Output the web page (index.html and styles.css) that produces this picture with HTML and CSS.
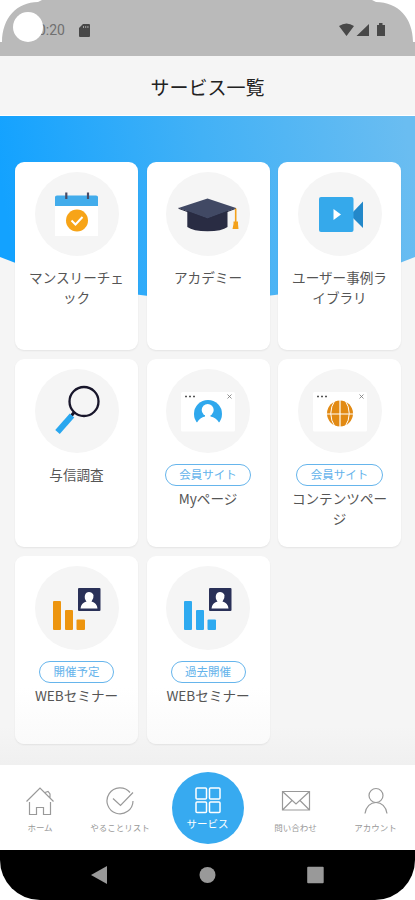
FILE: index.html
```html
<!DOCTYPE html>
<html lang="ja">
<head>
<meta charset="utf-8">
<meta name="viewport" content="width=device-width">
<title>サービス一覧</title>
<link rel="stylesheet" href="styles.css">
</head>
<body>
<div class="phone">
  <header class="status">
    <svg class="status-shape" viewBox="0 0 415 56"><path fill="#bababa" d="M0 56V42H2C2 18 17 2 38 2L42 0H372L376 2C398 2 413 18 413 42H415V56Z"/></svg>
    <span class="clock">10:20</span>
    <svg class="sd" viewBox="0 0 11 13"><path fill="#484848" d="M4 0H10Q11 0 11 1V12Q11 13 10 13H1Q0 13 0 12V4Z"/><path stroke="#bababa" stroke-width=".8" d="M4.500 2V4M6.700 2V4M8.900 2V4"/></svg>
    <span class="camera"></span>
    <svg class="signals" viewBox="0 0 47 14"><path fill="#484848" d="M0 3Q7.500-2 15 3L7.500 13ZM17.500 13L30 1V13ZM38 2H40V0H43.500V2H46V13H38Z"/></svg>
  </header>
  <h1 class="title">サービス一覧</h1>
  <main class="content">
    <svg class="hero" viewBox="0 0 415 184"><defs><linearGradient id="sky" gradientUnits="userSpaceOnUse" x1="0" y1="65" x2="405" y2="0"><stop stop-color="#13a2ff"/><stop offset=".5" stop-color="#42b1f6"/><stop offset="1" stop-color="#6abdf1"/></linearGradient></defs><path fill="url(#sky)" d="M0 0H415V141Q207.500 226 0 141Z"/></svg>
    <div class="grid">
      <a class="card">
        <svg class="icon" viewBox="0 0 84 84"><path fill="#fff" d="M20 31H63V64H20Z"/><path fill="#42aceb" d="M20 34V25Q20 23.500 22 23.500H61Q63 23.500 63 25V34Z"/><path stroke="#474b66" stroke-width="2.200" d="M31.300 20.500V27M53 20.500V27"/><circle cx="42" cy="48.500" r="11" fill="#f7a417"/><path fill="none" stroke="#fff" stroke-width="2" d="M36.500 48.500L40.500 52.500L47.500 45"/></svg>
        <span class="name">マンスリーチェック</span>
      </a>
      <a class="card">
        <svg class="icon" viewBox="0 0 84 84"><path fill="#292c43" d="M21.300 38H61.500V55Q56 59.200 41.500 59.200T21.300 55Z"/><path fill="#414964" d="M12.500 36L41.500 26.500L70 36L41.500 46.500Z"/><path fill="none" stroke="#292c43" d="M12.500 36.300L41.500 47L70 36.300"/><path fill="none" stroke="#f3a11c" stroke-width="1.600" d="M69.700 36.500V51"/><path fill="#f3a11c" d="M67.500 49.500H72V52L72.500 57H66.500L67.500 52Z"/></svg>
        <span class="name">アカデミー</span>
      </a>
      <a class="card">
        <svg class="icon" viewBox="0 0 84 84"><path fill="#2388c9" d="M55 40L65 29.500V56L55 46Z"/><rect x="21" y="25" width="34.500" height="35" rx="2" fill="#35a9eb"/><path fill="#fff" d="M35.500 37L43 42.500L35.500 48Z"/></svg>
        <span class="name">ユーザー事例ライブラリ</span>
      </a>
      <a class="card">
        <svg class="icon" viewBox="0 0 84 84"><circle cx="49" cy="32.500" r="14.500" fill="none" stroke="#18162b" stroke-width="2.300"/><path stroke="#18162b" stroke-width="3" d="M39.500 43L36.500 46.500"/><path stroke="#29a7ef" stroke-width="6" d="M37 46.500L22.500 63"/></svg>
        <span class="name">与信調査</span>
      </a>
      <a class="card">
        <svg class="icon" viewBox="0 0 84 84"><rect x="15" y="23" width="54" height="39.500" rx="1.500" fill="#fff"/><path stroke="#555" stroke-width="1.500" stroke-dasharray="2 2" d="M19 27.500H29"/><path stroke="#777" stroke-width=".8" d="M61.500 25.500L65.500 29.500M65.500 25.500L61.500 29.500"/><circle cx="42" cy="45" r="14" fill="#2fa8ed"/><circle cx="41.700" cy="41" r="6" fill="#fff"/><path fill="#fff" d="M39 45H44.500V47.500Q50 48.500 53 53.500L57 54V60H27V54L31 53.500Q34 48.500 39 47.500Z"/></svg>
        <span class="tag">会員サイト</span>
        <span class="name">Myページ</span>
      </a>
      <a class="card">
        <svg class="icon" viewBox="0 0 84 84"><rect x="15" y="23" width="54" height="39.500" rx="1.500" fill="#fff"/><path stroke="#555" stroke-width="1.500" stroke-dasharray="2 2" d="M19 27.500H29"/><path stroke="#777" stroke-width=".8" d="M61.500 25.500L65.500 29.500M65.500 25.500L61.500 29.500"/><circle cx="42" cy="44.500" r="13" fill="#e28a13"/><g fill="none" stroke="#fff" stroke-width="1.200"><path d="M37 31Q28.500 44.500 37 58M47 31Q55.500 44.500 47 58" stroke-width="1"/><path d="M42 31V58M29 45H55"/></g></svg>
        <span class="tag">会員サイト</span>
        <span class="name">コンテンツページ</span>
      </a>
      <a class="card">
        <svg class="icon" viewBox="0 0 84 84"><g fill="#ed950f"><rect x="18" y="35" width="8" height="29" rx="1"/><rect x="30" y="44" width="8" height="20" rx="1"/><rect x="41.500" y="53.500" width="8.500" height="10.500" rx="1"/></g><rect x="43" y="22" width="22.500" height="23" rx="1" fill="#2a3158"/><path fill="#fff" d="M45.500 42.500Q46 37 51.500 35.500Q49 32.500 50 29Q51 26 54 26Q57 26 58.500 29Q59 32.500 56.500 35.500Q62 37 62.500 42.500Z"/></svg>
        <span class="tag">開催予定</span>
        <span class="name">WEBセミナー</span>
      </a>
      <a class="card">
        <svg class="icon" viewBox="0 0 84 84"><g fill="#2eaaf0"><rect x="18" y="35" width="8" height="29" rx="1"/><rect x="30" y="44" width="8" height="20" rx="1"/><rect x="41.500" y="53.500" width="8.500" height="10.500" rx="1"/></g><rect x="43" y="22" width="22.500" height="23" rx="1" fill="#2a3158"/><path fill="#fff" d="M45.500 42.500Q46 37 51.500 35.500Q49 32.500 50 29Q51 26 54 26Q57 26 58.500 29Q59 32.500 56.500 35.500Q62 37 62.500 42.500Z"/></svg>
        <span class="tag">過去開催</span>
        <span class="name">WEBセミナー</span>
      </a>
    </div>
  </main>
  <nav class="tabs">
    <a class="tab"><svg viewBox="0 0 30 30"><path d="M1.500 15.500L15 2L28.500 15.500M4.500 16V28.500H11.500V21.500H18.500V28.500H25.500V16M20 6.500L23 5.500L25 8V11.500"/></svg><span>ホーム</span></a>
    <a class="tab"><svg viewBox="0 0 30 30"><path d="M25 6.500A13 13 0 1 0 28 15M8 12.500L15.500 19.500L28 6.500"/></svg><span>やることリスト</span></a>
    <a class="tab active"><svg viewBox="0 0 30 30"><rect x="3" y="3" width="10.500" height="11" rx="1"/><rect x="16.500" y="3" width="10.500" height="11" rx="1"/><rect x="3" y="17" width="10.500" height="10.500" rx="1"/><rect x="16.500" y="17" width="10.500" height="10.500" rx="1"/></svg><span>サービス</span></a>
    <a class="tab"><svg viewBox="0 0 30 30"><path d="M1.500 5.500H28.500V24H1.500ZM1.500 5.500L15 18L28.500 5.500M1.500 24L11 14.500M28.500 24L19 14.500"/></svg><span>問い合わせ</span></a>
    <a class="tab"><svg viewBox="0 0 30 30"><circle cx="15" cy="9.500" r="7"/><path d="M4 27.500C5 20.500 9.500 16.500 15 16.500S25 20.500 26 27.500"/></svg><span>アカウント</span></a>
  </nav>
  <footer class="system">
    <svg viewBox="0 0 17 20"><path fill="#999" d="M0 10L16 1V19Z"/></svg>
    <svg viewBox="0 0 17 20"><circle cx="8.500" cy="10" r="8" fill="#999"/></svg>
    <svg viewBox="0 0 17 20"><rect x=".2" y="1.700" width="16.500" height="16.500" rx="1" fill="#999"/></svg>
  </footer>
</div>
</body>
</html>
```

FILE: styles.css
```css
* { box-sizing: border-box; }

body {
  margin: 0;
  background: #fff;
  font-family: "Noto Sans CJK JP", "Noto Sans", sans-serif;
}

.phone {
  width: 415px;
  height: 900px;
  display: flex;
  flex-direction: column;
  overflow: hidden;
}

.status {
  position: relative;
  height: 56px;
  flex: none;
  display: flex;
  align-items: center;
  padding: 4px 29px 0 37px;
}

.status-shape { position: absolute; inset: 0; width: 415px; height: 56px; }

.clock {
  position: relative;
  width: 28px;
  color: #707070;
  font: 14px/20px Roboto, sans-serif;
  display: flex;
  justify-content: flex-end;
}

.sd { position: relative; width: 11px; height: 13px; margin-left: 14px; }
.signals { position: relative; width: 47px; height: 14px; margin-left: auto; }

.camera {
  position: absolute;
  left: 13px;
  top: 12px;
  width: 30px;
  height: 30px;
  border-radius: 50%;
  background: #fff;
}

.title {
  flex: none;
  height: 60px;
  margin: 0;
  background: #f5f5f5;
  border-bottom: 1px solid #fff;
  color: #222;
  font-size: 19px;
  font-weight: 400;
  line-height: 61px;
  text-align: center;
}

.content {
  position: relative;
  height: 649px;
  flex: none;
  padding: 46px 14px 0 15px;
  background: linear-gradient(#f5f5f5 94%, #f0f0f0);
}

.hero { position: absolute; left: 0; top: 0; width: 415px; height: 184px; }

.grid {
  position: relative;
  display: grid;
  grid-template-columns: repeat(3, 123px);
  grid-auto-rows: 188px;
  gap: 9px 8.500px;
}

.card {
  display: flex;
  flex-direction: column;
  align-items: center;
  padding: 10px 12px 0;
  border-radius: 9px;
  background: #fff;
  box-shadow: 0 1px 2px rgba(0, 0, 0, .07);
}

.card:nth-child(n+7) { background: linear-gradient(#fff 70%, #fafafa); }

.icon {
  width: 84px;
  height: 84px;
  flex: none;
  margin-bottom: 11px;
  border-radius: 50%;
  background: #f5f5f5;
}

.name {
  width: 98px;
  color: #555;
  font-size: 13.600px;
  line-height: 20px;
  text-align: center;
  word-break: break-all;
}

.tag {
  height: 22px;
  margin: 0 0 2px;
  padding: 0 13.500px;
  border: 1px solid #66b5ec;
  border-radius: 11px;
  color: #64b3eb;
  font-size: 11.500px;
  line-height: 19px;
  white-space: nowrap;
}

.tabs {
  height: 85px;
  flex: none;
  display: grid;
  grid-template-columns: 80px 80px 95px 81px 79px;
  align-items: center;
  background: #fff;
}

.tab {
  height: 72px;
  display: flex;
  flex-direction: column;
  align-items: center;
  padding-top: 14px;
  color: #999;
  font-size: 8.500px;
  line-height: 14px;
  white-space: nowrap;
}

.tab svg {
  width: 30px;
  height: 30px;
  flex: none;
  margin-bottom: 4px;
  fill: none;
  stroke: #999;
  stroke-width: 1.200;
}

.tab.active {
  width: 72px;
  justify-self: center;
  border-radius: 50%;
  padding-top: 13px;
  background: #37aaf0;
  color: #fff;
  font-size: 10.500px;
}

.tab.active svg { margin-bottom: 2px; stroke: #fff; stroke-width: 1.500; }

.system {
  height: 50px;
  flex: none;
  display: flex;
  justify-content: space-between;
  align-items: center;
  padding: 0 91px;
  border-radius: 0 0 40px 40px;
  background: #000;
}

.system svg { width: 17px; height: 20px; }
```
